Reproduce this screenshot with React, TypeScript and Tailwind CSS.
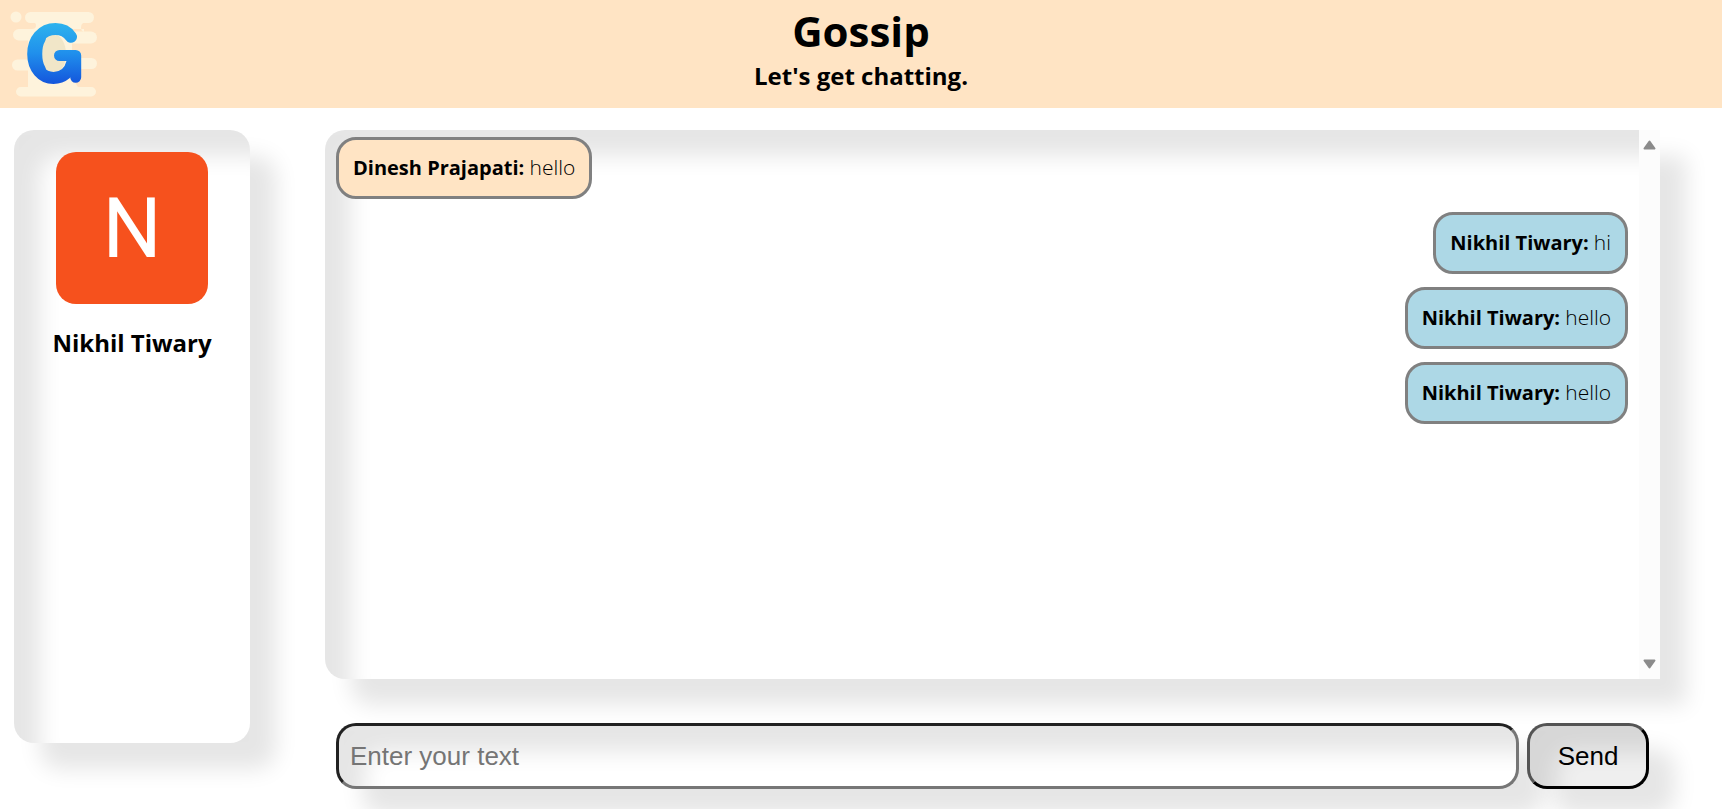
import { useState } from "react";

type Message = { id: number; author: string; text: string; own: boolean };

const initialMessages: Message[] = [
  { id: 1, author: "Dinesh Prajapati", text: "hello", own: false },
  { id: 2, author: "Nikhil Tiwary", text: "hi", own: true },
  { id: 3, author: "Nikhil Tiwary", text: "hello", own: true },
  { id: 4, author: "Nikhil Tiwary", text: "hello", own: true },
];

function Logo() {
  return (
    <svg viewBox="8 8 92 92" className="size-[92px]" role="img" aria-label="Gossip logo">
      <defs>
        <linearGradient id="logo-blue" gradientUnits="userSpaceOnUse" x1="0" y1="22" x2="0" y2="84">
          <stop offset="0" stopColor="#2eb4ee" />
          <stop offset="0.5" stopColor="#2090ec" />
          <stop offset="1" stopColor="#1455dc" />
        </linearGradient>
      </defs>
      <g fill="#fef3dc">
        <circle cx="16" cy="17" r="5.5" />
        <rect x="25" y="12" width="69" height="11" rx="5.5" />
        <path d="M32 22 Q36 22 36 25.500 Q36 29 32 29 H84 V32 Q81 31 81 27.500 Q81 22 87 22Z" />
        <rect x="13" y="29" width="60" height="11.500" rx="5.750" />
        <rect x="50" y="31.500" width="47" height="12" rx="6" />
        <rect x="28" y="38" width="44" height="50" />
        <rect x="12" y="59.500" width="50" height="11" rx="5.500" />
        <rect x="50" y="58" width="47" height="11" rx="5.500" />
        <path d="M36 70 V82 Q36 87 31 87 H78 Q75 84 75 78 V68Z" />
        <rect x="16" y="87" width="80" height="9.500" rx="4.750" />
      </g>
      <ellipse cx="53" cy="54" rx="13" ry="20" fill="#f1e6c8" />
      <g fill="none" stroke="url(#logo-blue)" strokeLinecap="round" strokeLinejoin="round">
        <path strokeWidth="12" d="M71 36.800 C67 31 61.500 29 55.500 29 C42 29 33.200 40 33.200 54 C33.200 68 42 78 53.500 78 C63 78 70 72 72.500 62" />
        <path strokeWidth="12" d="M40 38 C35 46 35 62 40 70" />
        <path strokeWidth="11" d="M59.500 55.500 H75.700 V77.300" />
      </g>
    </svg>
  );
}

function Bubble({ message }: { message: Message }) {
  const side = message.own ? "self-end bg-[#add8e6]" : "self-start bg-[#ffe4c4]";
  return (
    <li className={`rounded-[20px] border-[3px] border-[#808080] px-[14px] py-[13px] text-[20px] leading-[30px] ${side}`}>
      <b>{message.author}:</b> <span className="text-[21px] leading-none font-light">{message.text}</span>
    </li>
  );
}

export default function App() {
  const [messages, setMessages] = useState(initialMessages);
  const [draft, setDraft] = useState("");

  return (
    <div className="flex min-h-screen flex-col overflow-hidden bg-white font-['Open_Sans','Noto_Sans',sans-serif] text-black">
      <header className="grid h-[108px] grid-cols-[1fr_auto_1fr] bg-[#ffe4c4]">
        <div className="pt-2 pl-2">
          <Logo />
        </div>
        <div className="pt-2 text-center font-bold">
          <h1 className="text-[42px] leading-[46px]">Gossip</h1>
          <p className="text-[24px] leading-[44px]">Let's get chatting.</p>
        </div>
      </header>

      <main className="flex flex-1 gap-[75px] pt-[22px] pr-[62px] pb-5 pl-[14px]">
        <aside className="mb-[46px] flex w-[236px] shrink-0 flex-col items-center rounded-[20px] pt-[22px] shadow-[26px_26px_22px_rgba(0,0,0,0.1),inset_26px_26px_22px_rgba(0,0,0,0.1)]">
          <div className="flex size-[152px] items-center justify-center rounded-[20px] bg-[#f6511d] font-[Roboto,sans-serif] text-[83px] leading-none text-white">
            N
          </div>
          <h2 className="mt-[22px] text-[24px] leading-[34px] font-bold">Nikhil Tiwary</h2>
        </aside>

        <div className="flex min-w-0 flex-1 flex-col gap-11">
          <section className="flex flex-1 rounded-l-[20px] shadow-[26px_26px_22px_rgba(0,0,0,0.1)]" aria-label="Messages">
            <ul className="flex flex-1 flex-col gap-[13px] rounded-l-[20px] pt-[7px] pr-[11px] pl-[11px] shadow-[inset_26px_26px_22px_rgba(0,0,0,0.1)]">
              {messages.map((message) => (
                <Bubble key={message.id} message={message} />
              ))}
            </ul>
            <div className="flex w-[21px] flex-col items-center justify-between bg-[#fcfcfc] py-[10px]">
              <button type="button" aria-label="Scroll up">
                <svg viewBox="0 0 13 10" className="h-[10px] w-[13px]">
                  <path d="M6.500 1.500 L11.500 8.500 H1.500Z" fill="#8b8b8b" stroke="#8b8b8b" strokeWidth="2" strokeLinejoin="round" />
                </svg>
              </button>
              <button type="button" aria-label="Scroll down">
                <svg viewBox="0 0 13 10" className="h-[10px] w-[13px]">
                  <path d="M6.500 8.500 L11.500 1.500 H1.500Z" fill="#8b8b8b" stroke="#8b8b8b" strokeWidth="2" strokeLinejoin="round" />
                </svg>
              </button>
            </div>
          </section>

          <form
            className="flex h-[66px] gap-2 px-[11px] font-['Liberation_Sans',Arial,sans-serif] text-[26px]"
            onSubmit={(event) => {
              event.preventDefault();
              if (!draft.trim()) return;
              setMessages([...messages, { id: messages.length + 1, author: "Nikhil Tiwary", text: draft, own: true }]);
              setDraft("");
            }}
          >
            <input
              type="text"
              aria-label="Message"
              placeholder="Enter your text"
              value={draft}
              onChange={(event) => setDraft(event.target.value)}
              className="min-w-0 flex-1 rounded-[20px] border-[3px] border-[#767676] bg-white px-[11px] shadow-[26px_26px_22px_rgba(0,0,0,0.1),inset_26px_26px_22px_rgba(0,0,0,0.1)] [border-style:inset] placeholder:text-[#757575]"
            />
            <button
              type="submit"
              className="w-[122px] rounded-[20px] border-[3px] border-black bg-[#efefef] shadow-[26px_26px_22px_rgba(0,0,0,0.1),inset_26px_26px_22px_rgba(0,0,0,0.1)] [border-style:outset]"
            >
              Send
            </button>
          </form>
        </div>
      </main>
    </div>
  );
}
